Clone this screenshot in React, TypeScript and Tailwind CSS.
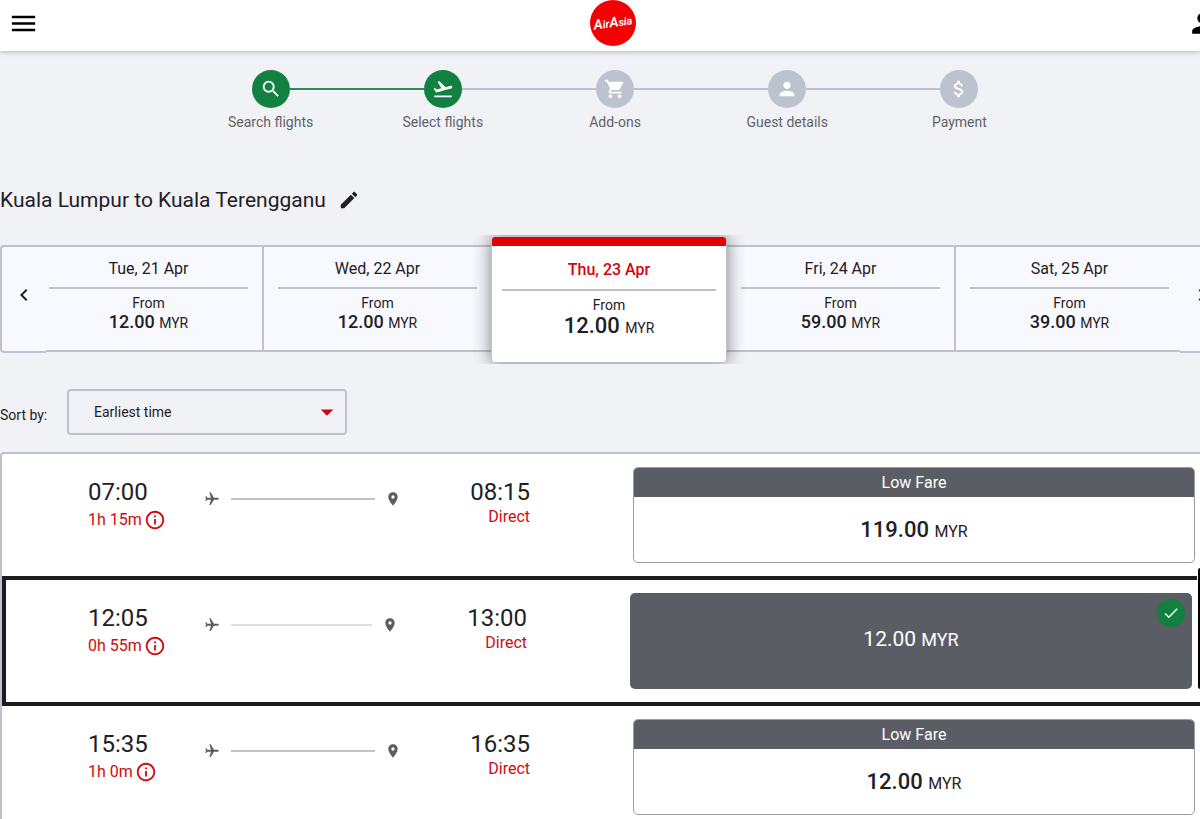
import { useState } from "react";
import type { IconType } from "react-icons";
import {
  MdArrowDropDown,
  MdAttachMoney,
  MdCheck,
  MdChevronLeft,
  MdChevronRight,
  MdEdit,
  MdFlight,
  MdFlightTakeoff,
  MdInfoOutline,
  MdLocationOn,
  MdMenu,
  MdPerson,
  MdSearch,
  MdShoppingCart,
} from "react-icons/md";

type Step = { label: string; icon: IconType; done: boolean; lineDone: boolean };
type Day = { date: string; price: string };
type Flight = { depart: string; arrive: string; duration: string; price: string; lowFare: boolean };

const steps: Step[] = [
  { label: "Search flights", icon: MdSearch, done: true, lineDone: true },
  { label: "Select flights", icon: MdFlightTakeoff, done: true, lineDone: false },
  { label: "Add-ons", icon: MdShoppingCart, done: false, lineDone: false },
  { label: "Guest details", icon: MdPerson, done: false, lineDone: false },
  { label: "Payment", icon: MdAttachMoney, done: false, lineDone: false },
];

const days: Day[] = [
  { date: "Tue, 21 Apr", price: "12.00" },
  { date: "Wed, 22 Apr", price: "12.00" },
  { date: "Thu, 23 Apr", price: "12.00" },
  { date: "Fri, 24 Apr", price: "59.00" },
  { date: "Sat, 25 Apr", price: "39.00" },
];

const flights: Flight[] = [
  { depart: "07:00", arrive: "08:15", duration: "1h 15m", price: "119.00", lowFare: true },
  { depart: "12:05", arrive: "13:00", duration: "0h 55m", price: "12.00", lowFare: false },
  { depart: "15:35", arrive: "16:35", duration: "1h 0m", price: "12.00", lowFare: true },
];

function Logo() {
  return (
    <svg viewBox="0 0 46 46" className="size-[46px]" role="img" aria-label="AirAsia">
      <circle cx="23" cy="23" r="23" fill="#f40000" />
      <text
        x="23"
        y="27"
        textAnchor="middle"
        transform="rotate(-8 23 23)"
        fill="#fff"
        fontFamily="Roboto, sans-serif"
        fontSize="11"
        fontStyle="italic"
        fontWeight="600"
      >
        <tspan fontSize="14">A</tspan>ir<tspan fontSize="14">A</tspan>sia
      </text>
    </svg>
  );
}

function Header() {
  return (
    <header className="relative z-10 bg-white shadow-[0_1px_5px_rgba(0,0,0,0.25)]">
      <div className="-mr-[26px] flex h-[51px] items-start justify-between px-2">
        <button type="button" aria-label="Menu" className="mt-2 text-black">
          <MdMenu size={31} />
        </button>
        <a href="#home">
          <Logo />
        </a>
        <button type="button" aria-label="Account" className="mt-2 text-black">
          <MdPerson size={31} />
        </button>
      </div>
    </header>
  );
}

function Steps() {
  return (
    <ol className="mx-auto flex w-[70%] pt-[19px]">
      {steps.map(({ label, icon: Icon, done, lineDone }, i) => (
        <li key={label} className="flex-1">
          <div className="flex items-center">
            <span
              className={
                i === 0
                  ? "h-0.5 flex-1"
                  : steps[i - 1].lineDone
                    ? "h-0.5 flex-1 bg-[#2f8a58]"
                    : "h-0.5 flex-1 bg-[#bcc3ce]"
              }
            />
            <span
              className={
                done
                  ? "flex size-[38px] items-center justify-center rounded-full bg-[#128041] text-white"
                  : "flex size-[38px] items-center justify-center rounded-full bg-[#bcc3ce] text-white"
              }
            >
              <Icon size={22} />
            </span>
            <span
              className={
                i === steps.length - 1
                  ? "h-0.5 flex-1"
                  : lineDone
                    ? "h-0.5 flex-1 bg-[#2f8a58]"
                    : "h-0.5 flex-1 bg-[#bcc3ce]"
              }
            />
          </div>
          <p className="mt-1 text-center text-sm text-[#5f6269]">{label}</p>
        </li>
      ))}
    </ol>
  );
}

function DayCell({ day, first, onSelect }: { day: Day; first: boolean; onSelect: () => void }) {
  return (
    <button
      type="button"
      onClick={onSelect}
      className={
        first
          ? "mt-[9px] flex h-[107px] flex-1 flex-col border-y-2 border-[#bdc2cc] bg-[#f8f9fe] px-3 pt-3"
          : "mt-[9px] flex h-[107px] flex-1 flex-col border-y-2 border-l-2 border-[#bdc2cc] bg-[#f8f9fe] px-3 pt-3"
      }
    >
      <span className="w-full leading-5">{day.date}</span>
      <span className="mt-2 w-full px-0.5">
        <span className="block h-0.5 bg-[#bdc2cc]" />
      </span>
      <span className="mt-[5px] w-full text-sm leading-[18px]">From</span>
      <span className="w-full text-sm leading-5">
        <span className="text-lg leading-5 font-medium">{day.price} </span>MYR
      </span>
    </button>
  );
}

function SelectedDay({ day }: { day: Day }) {
  return (
    <div className="z-20 h-[127px] w-[236px] rounded border border-[#bdc2cc] bg-white text-center shadow-[0_0_18px_rgba(0,0,0,0.5)] [clip-path:inset(-1px_-18px)]">
      <div className="h-[9px] rounded-t-[3px] bg-[#e30000]" />
      <p className="mt-3.5 leading-5 font-medium text-[#d8000d]">{day.date}</p>
      <div className="mx-2.5 mt-[9px] h-0.5 bg-[#bdc2cc]" />
      <p className="mt-[5px] text-sm leading-[18px]">From</p>
      <p className="text-sm leading-6">
        <span className="text-[22px] leading-6 font-medium">{day.price} </span>MYR
      </p>
    </div>
  );
}

function FareCard({ flight, selected, onSelect }: { flight: Flight; selected: boolean; onSelect: () => void }) {
  if (selected) {
    return (
      <button type="button" className="relative h-24 rounded-[5px] bg-[#5b5d65] pb-1 text-lg text-white">
        <span className="text-[21px]">{flight.price} </span>MYR
        <span className="absolute top-1.5 right-[7px] flex size-7 items-center justify-center rounded-full bg-[#128041]">
          <MdCheck size={18} />
        </span>
      </button>
    );
  }
  return (
    <button
      type="button"
      onClick={onSelect}
      className="flex h-24 flex-col overflow-hidden rounded-[5px] border border-[#9a9ca1] bg-white"
    >
      {flight.lowFare && (
        <span className="block w-full bg-[#5b5d65] leading-[29px] text-white">Low Fare</span>
      )}
      <span className="flex w-full flex-1 items-center justify-center">
        <span>
          <span className="text-[22px] font-medium">{flight.price} </span>MYR
        </span>
      </span>
    </button>
  );
}

function FlightRow({ flight, selected, onSelect }: { flight: Flight; selected: boolean; onSelect: () => void }) {
  return (
    <li
      className={
        selected
          ? "grid grid-cols-[1fr_562px] border-4 border-[#1c1c1c] py-[13px] pr-7 pl-[82px]"
          : "grid grid-cols-[1fr_562px] py-[13px] pr-[29px] pl-[86px]"
      }
    >
      <div className="flex items-start pt-[9px] pr-[103px]">
        <div className="w-[116px]">
          <p className="text-2xl leading-8">{flight.depart}</p>
          <p className="flex h-6 items-center gap-0.5 text-[#d20a11]">
            {flight.duration}
            <MdInfoOutline size={22} />
          </p>
        </div>
        <div className="flex h-[46px] flex-1 items-center text-[#5b5d65]">
          <MdFlight size={16} className="rotate-90" />
          <span
            className={selected ? "mr-2.5 ml-[11px] h-0.5 flex-1 bg-[#dcdee3]" : "mr-2.5 ml-[11px] h-0.5 flex-1 bg-[#bdc2cc]"}
          />
          <MdLocationOn size={16} />
        </div>
        <div className="w-[129px] text-right">
          <p className="text-2xl leading-8">{flight.arrive}</p>
          <p className="leading-[18px] text-[#d20a11]">Direct</p>
        </div>
      </div>
      <FareCard flight={flight} selected={selected} onSelect={onSelect} />
    </li>
  );
}

export default function App() {
  const [day, setDay] = useState<number>(2);
  const [flight, setFlight] = useState<number>(1);

  return (
    <div className="relative min-h-screen overflow-x-clip bg-[#f1f2f6] font-['Roboto',sans-serif] text-[#1f2024]">
      <Header />

      <main className="-mr-[26px]">
        <div className="-mr-1">
          <Steps />
        </div>

        <div className="mt-[54px] flex items-center gap-3">
          <h1 className="text-[21px] leading-7">Kuala Lumpur to Kuala Terengganu</h1>
          <button type="button" aria-label="Edit search">
            <MdEdit size={22} />
          </button>
        </div>

        <div className="mt-[22px] flex items-start">
          <button
            type="button"
            aria-label="Earlier dates"
            onClick={() => setDay(Math.max(0, day - 1))}
            className="z-10 mt-[9px] -mr-[11px] flex h-[108px] w-[46px] items-center justify-center rounded-l border-y-2 border-l-2 border-[#bdc2cc] bg-[#f8f9fe] pb-2"
          >
            <MdChevronLeft size={24} />
          </button>
          {days.map((d, i) =>
            i === day ? (
              <SelectedDay key={d.date} day={d} />
            ) : (
              <DayCell key={d.date} day={d} first={i === 0 || i === day + 1} onSelect={() => setDay(i)} />
            )
          )}
          <button
            type="button"
            aria-label="Later dates"
            onClick={() => setDay(Math.min(days.length - 1, day + 1))}
            className="z-10 mt-[9px] -ml-[3px] flex h-[108px] w-[46px] items-center justify-center rounded-r border-y-2 border-r-2 border-[#bdc2cc] bg-[#f8f9fe] pb-2"
          >
            <MdChevronRight size={24} />
          </button>
        </div>

        <div className="mt-[26px] flex items-center">
          <label htmlFor="sort" className="w-[67px] pt-1.5 text-sm">
            Sort by:
          </label>
          <div className="relative">
            <select
              id="sort"
              className="h-[46px] w-[280px] appearance-none rounded border-2 border-[#bdc2cc] bg-transparent px-[25px] text-sm"
            >
              <option>Earliest time</option>
              <option>Lowest fare</option>
            </select>
            <MdArrowDropDown size={30} className="pointer-events-none absolute top-2 right-[5px] text-[#d0021b]" />
          </div>
        </div>

        <ul className="mt-[17px] rounded-t border-2 border-b-0 border-[#bdc2cc] bg-white">
          {flights.map((f, i) => (
            <FlightRow key={f.depart} flight={f} selected={i === flight} onSelect={() => setFlight(i)} />
          ))}
        </ul>
      </main>

      {/* feedback tab, tucked against the window edge */}
      <button
        type="button"
        aria-label="Feedback"
        className="absolute top-[568px] right-0 h-[121px] w-[3px] rounded-l-sm border-l border-white bg-black"
      />
    </div>
  );
}
